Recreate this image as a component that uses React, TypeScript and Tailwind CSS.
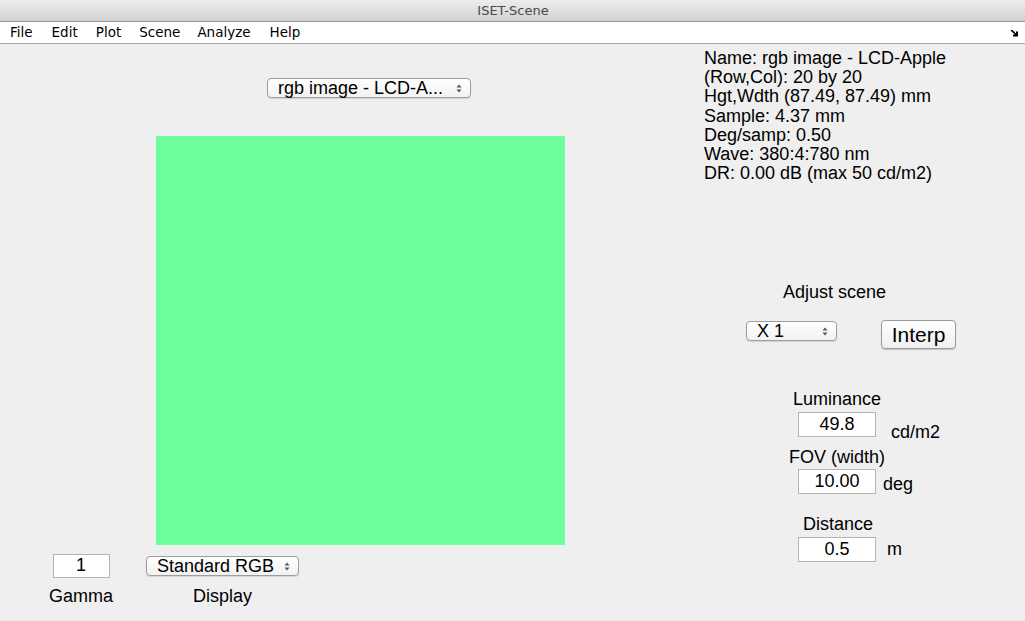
import React from "react";

const F = { fontFamily: '"Liberation Sans", Arial, sans-serif' };

function Arrows() {
  return (
    <svg width="6" height="9" viewBox="0 0 6 9" className="shrink-0">
      <path d="M0.5 3.5 L3 0.5 L5.5 3.5 Z" fill="#555" />
      <path d="M0.5 5.5 L3 8.5 L5.5 5.5 Z" fill="#555" />
    </svg>
  );
}

function Popup({ label, w, text = "text-[18px]" }: { label: string; w: string; text?: string }) {
  return (
    <div
      className={`${w} h-[20px] flex items-center justify-between pl-[10px] pr-[8px] rounded-[4px] border border-[#9d9d9d] bg-gradient-to-b from-white to-[#f2f2f2] shadow-[0_1px_1px_rgba(0,0,0,0.12)] ${text} leading-none text-black`}
    >
      <span className="whitespace-nowrap">{label}</span>
      <Arrows />
    </div>
  );
}

function Field({ value, w = "w-[78px]", h = "h-[25px]" }: { value: string; w?: string; h?: string }) {
  return (
    <div
      className={`${w} ${h} shrink-0 bg-white border border-[#b4b4b4] flex items-center justify-center text-[18px] leading-none text-black pb-[2px]`}
    >
      {value}
    </div>
  );
}

export default function App() {
  const info = [
    "Name: rgb image - LCD-Apple",
    "(Row,Col): 20 by 20",
    "Hgt,Wdth (87.49, 87.49) mm",
    "Sample: 4.37 mm",
    "Deg/samp: 0.50",
    "Wave: 380:4:780 nm",
    "DR: 0.00 dB (max 50 cd/m2)",
  ];
  return (
    <div className="w-[1025px] h-[621px] overflow-hidden bg-[#efefef] flex flex-col" style={F}>
      {/* title bar */}
      <div
        className="h-[22px] shrink-0 flex items-center justify-center bg-gradient-to-b from-[#ededed] to-[#d2d2d2] border-b border-[#979797] text-[13px] text-[#4a4a4a]"
        style={{ fontFamily: '"DejaVu Sans", sans-serif' }}
      >
        <span className="ml-[1px]">ISET-Scene</span>
      </div>
      {/* menu bar */}
      <div
        className="h-[22px] shrink-0 flex items-center bg-white border-b border-[#a8a8a8] text-[13.5px] text-black relative"
        style={{ fontFamily: '"DejaVu Sans", sans-serif' }}
      >
        <span className="ml-[10px]">File</span>
        <span className="ml-[19px]">Edit</span>
        <span className="ml-[18px]">Plot</span>
        <span className="ml-[18px]">Scene</span>
        <span className="ml-[17px]">Analyze</span>
        <span className="ml-[19px]">Help</span>
        <svg width="9" height="8" viewBox="0 0 9 8" className="absolute left-[1010px] top-[7px]">
          <path d="M0.5 1 L2.5 1 L6 4.5 L6 2.5 L8 2.5 L8 7.5 L3 7.5 L3 5.5 L5 5.5 L1.5 2.5 Z" fill="#000" />
        </svg>
      </div>
      {/* body */}
      <div className="flex flex-1 min-h-0">
        {/* left */}
        <div className="w-[704px] shrink-0 flex flex-col">
          <div className="mt-[34px] ml-[267px]">
            <Popup label="rgb image - LCD-A..." w="w-[204px]" />
          </div>
          <div className="mt-[38px] ml-[156px] w-[409px] h-[409px] bg-[#6fff9e]" />
          <div className="mt-[9px] flex items-start text-[18px] leading-[20px] text-black">
            <div className="ml-[49px] w-[64px] flex flex-col items-center">
              <Field value="1" w="w-[57px]" h="h-[24px]" />
              <div className="mt-[8px]">Gamma</div>
            </div>
            <div className="ml-[33px] w-[153px] flex flex-col items-center">
              <div className="mt-[2px]">
                <Popup label="Standard RGB" w="w-[153px]" />
              </div>
              <div className="mt-[10px]">Display</div>
            </div>
          </div>
        </div>
        {/* right */}
        <div className="flex-1 flex flex-col text-[18px] text-black">
          <div className="mt-[5px] leading-[19.2px]">
            {info.map((l) => (
              <div key={l} className="whitespace-nowrap">{l}</div>
            ))}
          </div>
          <div className="mt-[99px] ml-[79px] leading-[20px]">Adjust scene</div>
          <div className="mt-[18px] flex items-start">
            <div className="ml-[42px] mt-[1px]">
              <Popup label="X 1" w="w-[91px]" />
            </div>
            <div className="ml-[44px] w-[75px] h-[29px] rounded-[4px] border border-[#9a9a9a] bg-gradient-to-b from-white to-[#efefef] shadow-[0_1px_1px_rgba(0,0,0,0.2)] flex items-center justify-center text-[21px] leading-none pb-[1px]">
              Interp
            </div>
          </div>
          <div className="mt-[40px] ml-[89px] leading-[20px]">Luminance</div>
          <div className="mt-[3px] flex items-start leading-[20px]">
            <div className="ml-[94px]"><Field value="49.8" /></div>
            <div className="ml-[15px] mt-[10px]">cd/m2</div>
          </div>
          <div className="mt-[5px] ml-[85px] leading-[20px]">FOV (width)</div>
          <div className="mt-[2px] flex items-start leading-[20px]">
            <div className="ml-[94px]"><Field value="10.00" /></div>
            <div className="ml-[7px] mt-[5px]">deg</div>
          </div>
          <div className="mt-[20px] ml-[99px] leading-[20px]">Distance</div>
          <div className="mt-[3px] flex items-start leading-[20px]">
            <div className="ml-[94px]"><Field value="0.5" /></div>
            <div className="ml-[11px] mt-[2px]">m</div>
          </div>
        </div>
      </div>
    </div>
  );
}
